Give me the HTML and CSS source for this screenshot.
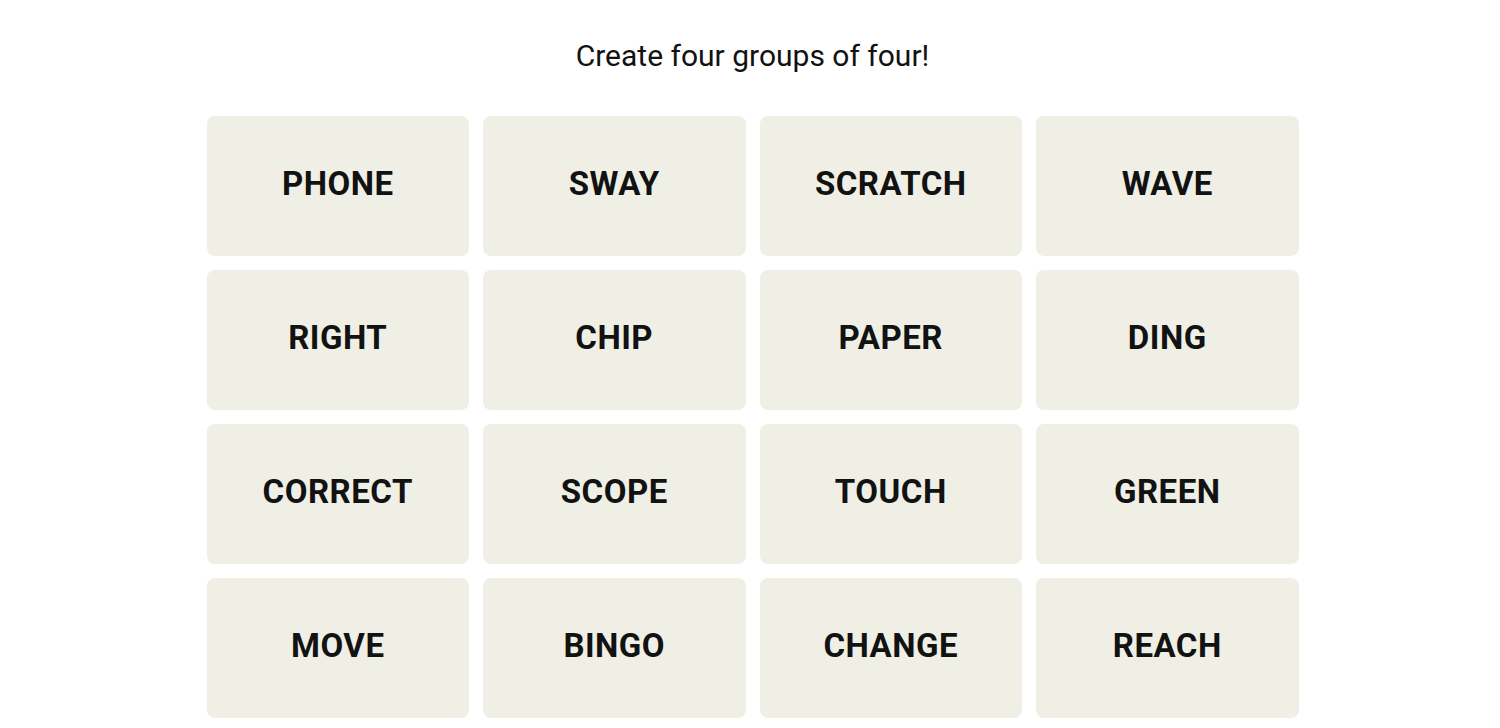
FILE: index.html
```html
<!DOCTYPE html>
<html lang="en">
<head>
    <meta charset="UTF-8">
    <meta name="viewport" content="width=device-width, initial-scale=1.0">
    <title>Connections</title>
    <link rel="stylesheet" href="styles.css">
</head>
<body>

<main class="game">
    <p class="prompt">Create four groups of four!</p>

    <!-- Word board -->
    <div class="board">
        <button class="tile">PHONE</button>
        <button class="tile">SWAY</button>
        <button class="tile">SCRATCH</button>
        <button class="tile">WAVE</button>
        <button class="tile">RIGHT</button>
        <button class="tile">CHIP</button>
        <button class="tile">PAPER</button>
        <button class="tile">DING</button>
        <button class="tile">CORRECT</button>
        <button class="tile">SCOPE</button>
        <button class="tile">TOUCH</button>
        <button class="tile">GREEN</button>
        <button class="tile">MOVE</button>
        <button class="tile">BINGO</button>
        <button class="tile">CHANGE</button>
        <button class="tile">REACH</button>
    </div>
</main>

</body>
</html>
```

FILE: styles.css
```css
body {
    margin: 0;
    padding-left: 5px;
    background-color: #ffffff;
    color: #121212;
    font-family: Roboto, "Liberation Sans", sans-serif;
}

.game {
    width: 1092px;
    margin: 0 auto;
}

.prompt {
    margin: 0;
    padding-top: 38px;
    height: 116px;
    box-sizing: border-box;
    text-align: center;
    font-size: 30px;
    font-weight: 400;
    line-height: 36px;
}

.board {
    display: grid;
    grid-template-columns: repeat(4, 1fr);
    grid-auto-rows: 140px;
    gap: 14px;
}

.tile {
    border: none;
    border-radius: 8px;
    padding: 0 0 6px;
    background-color: #efefe6;
    color: #121212;
    font-family: Roboto, "Liberation Sans", sans-serif;
    font-size: 33px;
    font-weight: 700;
    letter-spacing: 0.5px;
    cursor: pointer;
}
```
